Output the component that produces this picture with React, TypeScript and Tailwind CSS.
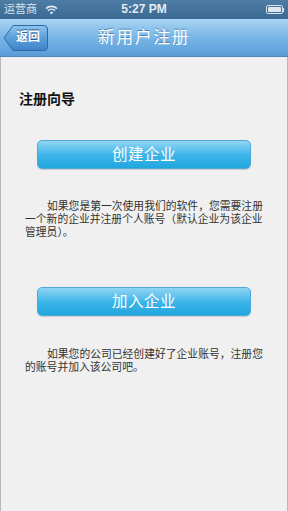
const CJK = "font-['Helvetica','Liberation_Sans','Noto_Sans_CJK_SC',sans-serif]";

function StatusBar() {
  return (
    <div className="relative flex h-[19px] items-center bg-gradient-to-b from-[#4d7ca5] to-[#3b6a94] px-[4px] text-[#d8e4ee]">
      <span className="text-[11px] leading-none">运营商</span>
      <svg className="ml-[8px]" width="13" height="10" viewBox="0 0 13 10">
        <path d="M1 3.6 A8 8 0 0 1 12 3.6" fill="none" stroke="#dfe8f0" strokeWidth="1.6" />
        <path d="M3 5.6 A5.2 5.2 0 0 1 10 5.6" fill="none" stroke="#dfe8f0" strokeWidth="1.6" />
        <path d="M6.5 9.4 L4.8 7.4 A2.4 2.4 0 0 1 8.2 7.4 Z" fill="#dfe8f0" />
      </svg>
      <span className="absolute left-1/2 top-[3px] -translate-x-1/2 text-[12px] font-bold leading-none text-[#e4ecf3]">
        5:27 PM
      </span>
      <div className="ml-auto flex items-center">
        <div className="flex h-[9px] w-[17px] items-center rounded-[2px] border border-[#d8e2ea] p-[1px]">
          <div className="h-full w-full rounded-[1px] bg-[#dfe7ee]" />
        </div>
        <div className="h-[4px] w-[1.5px] bg-[#d8e2ea]" />
      </div>
    </div>
  );
}

function BackButton() {
  return (
    <div className="relative h-[28px] w-[46px]">
      <svg className="absolute inset-0" width="46" height="28" viewBox="0 0 46 28">
        <defs>
          <linearGradient id="bk" x1="0" y1="0" x2="0" y2="1">
            <stop offset="0" stopColor="#8cc4ee" />
            <stop offset="0.5" stopColor="#5c9edb" />
            <stop offset="1" stopColor="#3f84c8" />
          </linearGradient>
        </defs>
        <path
          d="M1 14 L10 1.5 H41 Q44.5 1.5 44.5 5 V23 Q44.5 26.5 41 26.5 H10 Z"
          fill="url(#bk)"
          stroke="#2f6aa6"
          strokeWidth="1"
          strokeLinejoin="round"
        />
      </svg>
      <span className="absolute left-[13px] top-[7px] text-[12px] font-bold leading-none text-white [text-shadow:0_-1px_0_#2a5f96]">
        返回
      </span>
    </div>
  );
}

function NavBar() {
  return (
    <div className="relative flex h-[38px] items-center border-b border-[#4a88c2] bg-gradient-to-b from-[#a8d4f3] via-[#7ab6e6] to-[#589dd9] pl-[3px]">
      <BackButton />
      <span className="absolute left-1/2 top-[10px] -translate-x-1/2 text-[17px] leading-none tracking-[1.5px] text-white [text-shadow:0_-1px_0_#4a86bd]">
        新用户注册
      </span>
    </div>
  );
}

function BlueButton({ label }: { label: string }) {
  return (
    <button className="mx-auto flex h-[29px] w-[214px] items-center justify-center rounded-[5px] border border-[#4ea9d8] bg-gradient-to-b from-[#8ed5f3] via-[#3db6e9] to-[#1ea6de] text-[15.5px] leading-none tracking-[0.5px] text-white shadow-[0_1px_1px_rgba(0,0,0,0.15)]">
      {label}
    </button>
  );
}

function Paragraph({ text }: { text: string }) {
  return (
    <p className="mx-auto w-[238px] indent-[22px] text-[10.8px] leading-[13px] text-[#333]">
      {text}
    </p>
  );
}

export default function App() {
  return (
    <div className={`flex h-[511px] w-[288px] flex-col overflow-hidden ${CJK}`}>
      <StatusBar />
      <NavBar />
      <div className="flex flex-1 flex-col border-x-[1.5px] border-[#b8b8b8] bg-[#f0f0f0]">
        <h2 className="ml-[18px] mt-[35px] text-[14px] font-bold leading-none text-[#111]">注册向导</h2>
        <div className="mt-[34px]">
          <BlueButton label="创建企业" />
        </div>
        <div className="mt-[31px]">
          <Paragraph text="如果您是第一次使用我们的软件，您需要注册一个新的企业并注册个人账号（默认企业为该企业管理员）。" />
        </div>
        <div className="mt-[48px]">
          <BlueButton label="加入企业" />
        </div>
        <div className="mt-[32px]">
          <Paragraph text="如果您的公司已经创建好了企业账号，注册您的账号并加入该公司吧。" />
        </div>
      </div>
    </div>
  );
}
